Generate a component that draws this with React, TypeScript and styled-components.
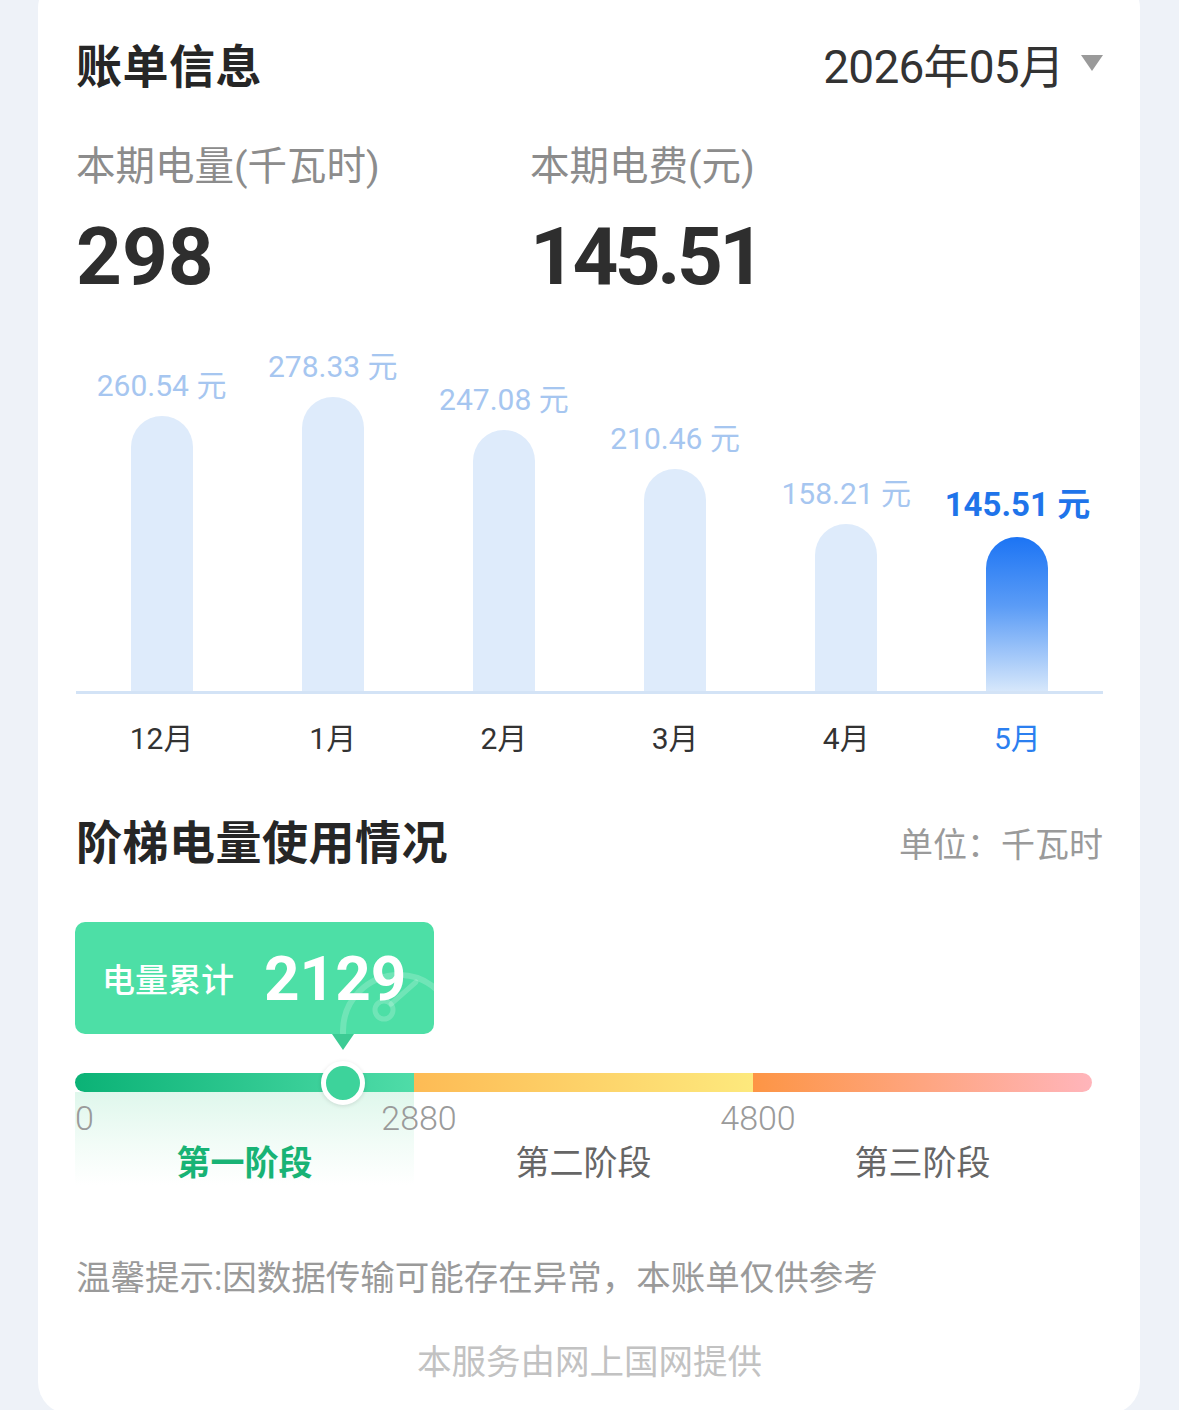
import React from "react";
import styled, { createGlobalStyle } from "styled-components";

const GlobalStyle = createGlobalStyle`
  html, body {
    margin: 0;
    padding: 0;
    background: #eef2f8;
  }
  body {
    font-family: Roboto, "Noto Sans CJK SC", "Noto Sans", sans-serif;
    color: #333;
  }
`;

const Page = styled.div`
  width: 1179px;
  height: 1410px;
  overflow: hidden;
  box-sizing: border-box;
  padding: 0 39px 0 38px;
  background: #eef2f8;
`;

const Card = styled.div`
  margin-top: -24px;
  background: #fff;
  border-radius: 32px;
  padding: 59px 37px 30px 38px;
  box-sizing: border-box;
`;

const HeaderRow = styled.div<{ $mt?: number }>`
  display: flex;
  align-items: center;
  justify-content: space-between;
  height: 56px;
  margin-top: ${(p) => p.$mt ?? 0}px;
`;

const Title = styled.h2`
  margin: 0;
  font-size: 46px;
  font-weight: 700;
  color: #262626;
  letter-spacing: 0.5px;
`;

const DatePicker = styled.div`
  display: flex;
  align-items: center;
  font-size: 46px;
  color: #333;
  letter-spacing: -0.8px;
`;

const Caret = styled.span`
  display: inline-block;
  margin-left: 17px;
  width: 0;
  height: 0;
  border-left: 11px solid transparent;
  border-right: 11px solid transparent;
  border-top: 16px solid #9a9a9a;
`;

const Unit = styled.span`
  font-size: 34px;
  color: #9a9a9a;
  margin-top: 6px;
`;

const Stats = styled.div`
  display: grid;
  grid-template-columns: 454px 1fr;
  margin-top: 54px;
`;

const StatLabel = styled.div`
  font-size: 39.5px;
  line-height: 44px;
  color: #8c8c8c;
`;

const StatValue = styled.div<{ $tight?: boolean }>`
  margin-top: 23px;
  font-size: 80px;
  line-height: 90px;
  font-weight: 700;
  color: #2e2e2e;
  letter-spacing: ${(p) => (p.$tight ? -3.5 : 0)}px;
`;

const ChartArea = styled.div`
  display: grid;
  grid-template-columns: repeat(6, 1fr);
  align-items: end;
  height: 389px;
  border-bottom: 3px solid #d3e3f6;
`;

const Column = styled.div`
  display: flex;
  flex-direction: column;
  align-items: center;
`;

const BarLabel = styled.div<{ $active?: boolean }>`
  white-space: nowrap;
  font-size: ${(p) => (p.$active ? 33 : 30)}px;
  line-height: 36px;
  font-weight: ${(p) => (p.$active ? 700 : 400)};
  color: ${(p) => (p.$active ? "#1f74ea" : "#a6c6f0")};
  margin-bottom: ${(p) => (p.$active ? 14 : 12)}px;
`;

const Bar = styled.div<{ $active?: boolean }>`
  width: 62px;
  border-radius: 31px 31px 0 0;
  background: ${(p) => (p.$active ? "linear-gradient(180deg, #1c74f4 0%, #5b9cf6 45%, #d6e7fb 100%)" : "#deebfb")};
`;

const Months = styled.div`
  display: grid;
  grid-template-columns: repeat(6, 1fr);
  margin-top: 25px;
`;

const Month = styled.div<{ $active?: boolean }>`
  text-align: center;
  font-size: 30px;
  line-height: 40px;
  color: ${(p) => (p.$active ? "#2b7ff0" : "#333")};
`;

const Badge = styled.div`
  position: relative;
  overflow: hidden;
  margin-top: 55px;
  margin-left: -1px;
  width: 359px;
  height: 112px;
  box-sizing: border-box;
  padding-left: 27px;
  border-radius: 10px;
  background: #4ddfa6;
  display: flex;
  align-items: center;
  color: #fff;
`;

const BadgeLabel = styled.span`
  font-size: 33px;
  font-weight: 500;
  margin-right: 30px;
`;

const BadgeValue = styled.span`
  font-size: 62px;
  font-weight: 700;
`;

const Gauge = styled.svg`
  position: absolute;
  right: -30px;
  bottom: -62px;
`;

const Track = styled.div`
  position: relative;
  margin-top: 39px;
  margin-left: -1px;
  width: 1017px;
  height: 19px;
  display: grid;
  grid-template-columns: repeat(3, 1fr);
`;

const Segment = styled.div<{ $from: string; $to: string; $round?: "left" | "right" }>`
  background: linear-gradient(90deg, ${(p) => p.$from}, ${(p) => p.$to});
  border-radius: ${(p) => (p.$round === "left" ? "10px 0 0 10px" : p.$round === "right" ? "0 10px 10px 0" : "0")};
`;

const Pointer = styled.span`
  position: absolute;
  bottom: calc(100% + 23px);
  width: 0;
  height: 0;
  transform: translateX(-50%);
  border-left: 11px solid transparent;
  border-right: 11px solid transparent;
  border-top: 16px solid #3ccb94;
`;

const Knob = styled.span`
  position: absolute;
  top: 50%;
  width: 34px;
  height: 34px;
  transform: translate(-50%, -50%);
  border-radius: 50%;
  background: #3dd39b;
  border: 5px solid #fff;
  box-shadow: 0 1px 4px rgba(0, 0, 0, 0.12);
`;

const Scale = styled.div`
  display: grid;
  grid-template-columns: repeat(3, 339px);
  margin-left: -1px;
`;

const StageCell = styled.div<{ $current?: boolean }>`
  height: 93px;
  background: ${(p) => (p.$current ? "linear-gradient(180deg, #dff7ec 0%, #f2fcf7 55%, #ffffff 100%)" : "transparent")};
`;

const Tick = styled.div<{ $center?: boolean }>`
  height: 40px;
  margin-top: 6px;
  font-size: 34px;
  line-height: 40px;
  font-weight: 300;
  color: #9a9a9a;
  white-space: nowrap;
  transform: ${(p) => (p.$center ? "translateX(calc(-50% + 5px))" : "none")};
  display: inline-block;
`;

const StageName = styled.div<{ $current?: boolean }>`
  margin-top: 3px;
  text-align: center;
  font-size: 34px;
  line-height: 44px;
  font-weight: ${(p) => (p.$current ? 700 : 400)};
  color: ${(p) => (p.$current ? "#18b375" : "#666")};
`;

const Tip = styled.div`
  margin-top: 71px;
  font-size: 34.5px;
  line-height: 44px;
  color: #9a9a9a;
`;

const Footer = styled.div`
  margin-top: 40px;
  text-align: center;
  font-size: 34.5px;
  line-height: 44px;
  color: #c2c2c2;
`;

const bills = [
  { month: "12月", fee: "260.54" },
  { month: "1月", fee: "278.33" },
  { month: "2月", fee: "247.08" },
  { month: "3月", fee: "210.46" },
  { month: "4月", fee: "158.21" },
  { month: "5月", fee: "145.51" },
];

const stages = [
  { name: "第一阶段", tick: "0", from: "#0bb276", to: "#4fdca8" },
  { name: "第二阶段", tick: "2880", from: "#fdbb55", to: "#fde97d" },
  { name: "第三阶段", tick: "4800", from: "#fd9545", to: "#ffb5bb" },
];

// knob sits on the first stage; reference places it a bit past the raw ratio
const KNOB_X = 268;

export default function App() {
  return (
    <Page>
      <GlobalStyle />
      <Card>
        <HeaderRow>
          <Title>账单信息</Title>
          <DatePicker>
            2026年05月
            <Caret />
          </DatePicker>
        </HeaderRow>

        <Stats>
          <div>
            <StatLabel>本期电量(千瓦时)</StatLabel>
            <StatValue>298</StatValue>
          </div>
          <div>
            <StatLabel>本期电费(元)</StatLabel>
            <StatValue $tight>145.51</StatValue>
          </div>
        </Stats>

        <ChartArea>
          {bills.map((b, i) => {
            const active = i === bills.length - 1;
            return (
              <Column key={b.month}>
                <BarLabel $active={active}>{b.fee} 元</BarLabel>
                <Bar $active={active} style={{ height: Math.round(parseFloat(b.fee) * 1.056) }} />
              </Column>
            );
          })}
        </ChartArea>
        <Months>
          {bills.map((b, i) => (
            <Month key={b.month} $active={i === bills.length - 1}>
              {b.month}
            </Month>
          ))}
        </Months>

        <HeaderRow $mt={52}>
          <Title>阶梯电量使用情况</Title>
          <Unit>单位：千瓦时</Unit>
        </HeaderRow>

        <Badge>
          <BadgeLabel>电量累计</BadgeLabel>
          <BadgeValue>2129</BadgeValue>
          <Gauge width="130" height="130" viewBox="0 0 130 130" fill="none">
            <circle cx="65" cy="65" r="56" stroke="rgba(255,255,255,0.2)" strokeWidth="6" />
            <circle cx="50" cy="44" r="9" stroke="rgba(255,255,255,0.2)" strokeWidth="5" />
            <path d="M57 38 L82 16" stroke="rgba(255,255,255,0.2)" strokeWidth="5" strokeLinecap="round" />
          </Gauge>
        </Badge>

        <Track>
          {stages.map((s, i) => (
            <Segment key={s.name} $from={s.from} $to={s.to} $round={i === 0 ? "left" : i === 2 ? "right" : undefined} />
          ))}
          <Pointer style={{ left: KNOB_X }} />
          <Knob style={{ left: KNOB_X }} />
        </Track>

        <Scale>
          {stages.map((s, i) => (
            <StageCell key={s.name} $current={i === 0}>
              <Tick $center={i > 0}>{s.tick}</Tick>
              <StageName $current={i === 0}>{s.name}</StageName>
            </StageCell>
          ))}
        </Scale>

        <Tip>温馨提示:因数据传输可能存在异常，本账单仅供参考</Tip>
        <Footer>本服务由网上国网提供</Footer>
      </Card>
    </Page>
  );
}
